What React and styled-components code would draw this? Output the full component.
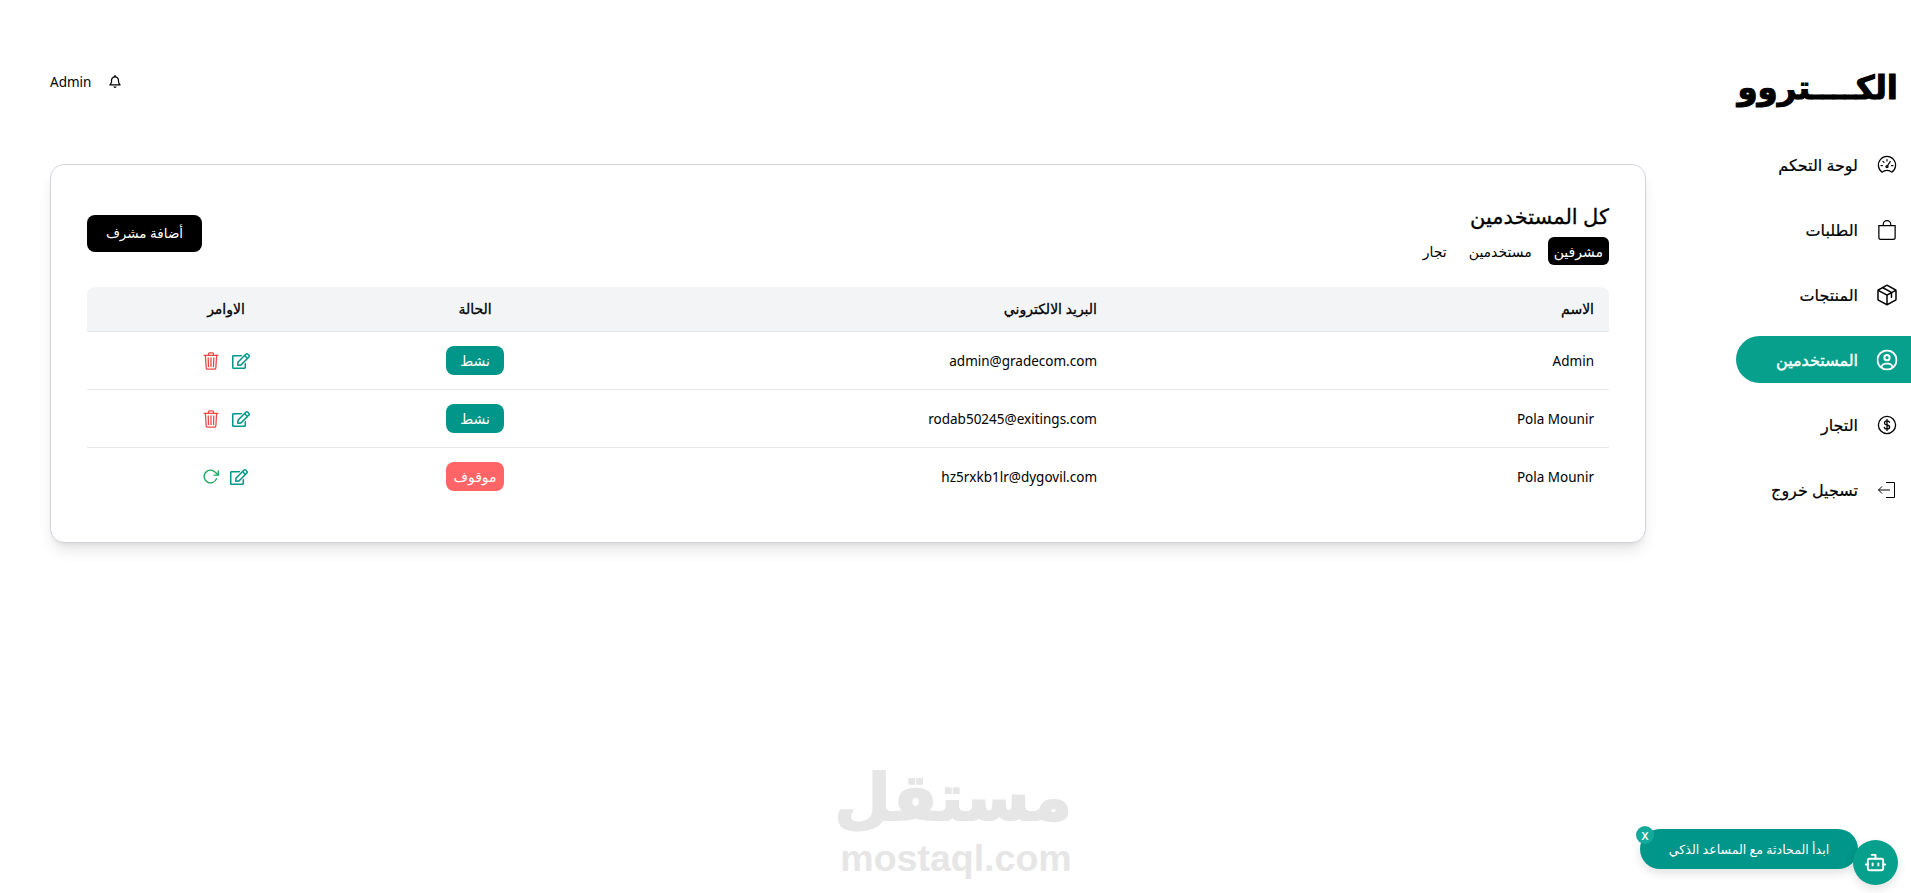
import React from 'react';
import styled, { createGlobalStyle } from 'styled-components';
import { FaRegEdit } from 'react-icons/fa';
import { IoTrashOutline } from 'react-icons/io5';
import { FiRotateCw } from 'react-icons/fi';
import { FaRegBell, FaRegCircleUser } from 'react-icons/fa6';
import { BsBag } from 'react-icons/bs';
import { PiPackage } from 'react-icons/pi';
import { LuBot } from 'react-icons/lu';

const GlobalStyle = createGlobalStyle`
  html, body {
    margin: 0;
    padding: 0;
    background: #fff;
  }
  body {
    font-family: "Noto Sans", "DejaVu Sans", sans-serif;
    color: #000;
  }
  * {
    box-sizing: border-box;
  }
`;

const Page = styled.div`
  display: flex;
  min-height: 893px;
  overflow: hidden;
`;

const Sidebar = styled.aside`
  width: 175px;
  flex-shrink: 0;
  padding-top: 64px;
`;

const Logo = styled.div`
  height: 46px;
  padding-right: 13px;
  font-size: 32.5px;
  line-height: 46px;
  font-weight: 700;
  white-space: nowrap;
  margin-bottom: 31px;
  -webkit-text-stroke: 1px #000;
`;

const Menu = styled.nav`
  display: flex;
  flex-direction: column;
  gap: 18px;
`;

const MenuItem = styled.a`
  display: flex;
  align-items: center;
  gap: 19px;
  height: 47px;
  padding-right: 14px;
  font-size: 16px;
  color: ${(p) => (p.$active ? '#fff' : '#000')};
  background: ${(p) => (p.$active ? '#07a08c' : 'transparent')};
  border-radius: 24px 0 0 24px;
  -webkit-text-stroke: ${(p) => (p.$active ? '0.4px #fff' : '0.2px #000')};

  svg {
    width: 20px;
    height: 20px;
    flex-shrink: 0;
  }
`;

const Main = styled.main`
  flex: 1;
  padding: 0 90px 0 50px;
`;

const TopBar = styled.header`
  display: flex;
  justify-content: flex-end;
  align-items: flex-start;
  gap: 18px;
  height: 164px;
  padding-top: 73px;
  font-size: 13.5px;

  svg {
    width: 12px;
    height: 13px;
    margin-top: 2px;
  }
`;

const Card = styled.section`
  background: #fff;
  border: 1px solid #d1d5db;
  border-radius: 14px;
  padding: 36px 36px 37px;
  box-shadow: 0 10px 15px -3px rgba(0, 0, 0, 0.1), 0 4px 6px -4px rgba(0, 0, 0, 0.1);
`;

const CardHead = styled.div`
  display: flex;
  justify-content: space-between;
  align-items: center;
  margin-bottom: 22px;
`;

const Title = styled.h2`
  margin: 0 0 6px;
  font-size: 21px;
  line-height: 30px;
  font-weight: 400;
  -webkit-text-stroke: 0.3px #000;
`;

const Tabs = styled.div`
  display: flex;
  gap: 10px;
`;

const Tab = styled.button`
  border: 0;
  height: 28px;
  padding: 0 6px;
  border-radius: 6px;
  font: inherit;
  font-size: 14px;
  background: ${(p) => (p.$active ? '#000' : 'transparent')};
  color: ${(p) => (p.$active ? '#fff' : '#000')};
`;

const AddButton = styled.button`
  border: 0;
  width: 115px;
  height: 37px;
  border-radius: 8px;
  background: #000;
  color: #fff;
  font: inherit;
  font-size: 13.5px;
`;

const Table = styled.table`
  width: 100%;
  table-layout: fixed;
  border-collapse: collapse;
  font-size: 13.5px;
`;

const HeadRow = styled.tr`
  height: 44px;
  background: #f3f4f6;
  border-bottom: 1px solid #e5e7eb;
`;

const Row = styled.tr`
  height: 58px;
  border-bottom: 1px solid #e5e7eb;

  &:last-child {
    border-bottom: 0;
  }
`;

const Th = styled.th`
  font-size: 14px;
  font-weight: 400;
  padding: 0 11px;
  text-align: ${(p) => (p.$center ? 'center' : 'right')};
  -webkit-text-stroke: 0.3px #000;

  &:first-child {
    border-radius: 0 8px 0 0;
    padding-right: 15px;
  }
  &:last-child {
    border-radius: 8px 0 0 0;
    padding-left: 26px;
  }
`;

const Td = styled.td`
  padding: 1px 11px 0;
  text-align: ${(p) => (p.$center ? 'center' : 'right')};

  &:first-child {
    padding-right: 15px;
  }
  &:last-child {
    padding-left: 24px;
  }
`;

const Badge = styled.span`
  display: inline-flex;
  align-items: center;
  justify-content: center;
  width: 58px;
  height: 29px;
  border-radius: 8px;
  color: #fff;
  font-size: 14px;
  background: ${(p) => (p.$off ? '#ff6467' : '#009689')};
`;

const Actions = styled.div`
  display: flex;
  justify-content: center;
  align-items: center;
  gap: 11px;
`;

const ActionIcon = styled.span`
  display: inline-flex;
  color: ${(p) => p.$color};

  svg {
    width: ${(p) => p.$size || 18}px;
    height: ${(p) => p.$size || 18}px;
  }
`;

const Watermark = styled.div`
  position: absolute;
  left: 840px;
  top: 758px;
  width: 232px;
  text-align: center;
  color: #e6e6e6;
  pointer-events: none;
`;

const WatermarkAr = styled.div`
  font-family: "DejaVu Sans", sans-serif;
  font-size: 65px;
  line-height: 80px;
  font-weight: 700;
  -webkit-text-stroke: 2px #e6e6e6;
`;

const WatermarkEn = styled.div`
  margin-top: 5px;
  font-family: "Liberation Sans", sans-serif;
  font-size: 37.5px;
  line-height: 30px;
  font-weight: 700;
  direction: ltr;
`;

const ChatBubble = styled.div`
  position: absolute;
  left: 1640px;
  top: 829px;
  width: 218px;
  height: 40px;
  border-radius: 20px;
  background: #009689;
  color: #fff;
  font-size: 12.6px;
  display: flex;
  align-items: center;
  justify-content: center;
  box-shadow: 0 4px 10px rgba(0, 0, 0, 0.12);
`;

const ChatClose = styled.span`
  position: absolute;
  left: -4px;
  top: -3px;
  width: 18px;
  height: 18px;
  border-radius: 50%;
  background: #14a99a;
  color: #fff;
  font-size: 11px;
  font-weight: 600;
  display: flex;
  align-items: center;
  justify-content: center;
`;

const ChatBot = styled.div`
  position: absolute;
  left: 1853px;
  top: 840px;
  width: 45px;
  height: 45px;
  border-radius: 50%;
  background: #07a08c;
  color: #fff;
  display: flex;
  align-items: center;
  justify-content: center;
  box-shadow: 0 4px 10px rgba(0, 0, 0, 0.12);
`;

const GaugeIcon = () => (
  <svg viewBox="0 0 20 20" fill="none" stroke="currentColor" strokeWidth="1.2" strokeLinecap="round">
    <path d="M5.2 17.2A8.6 8.6 0 1 1 14.8 17.2C13.6 16 12 15.4 10 15.4S6.4 16 5.2 17.2Z" />
    <path d="M10 11.5 13.2 6.6M4 10.6h1.4M14.6 10.6H16M6 6.4l1 1M10 4.6v1.4" />
    <circle cx="10" cy="11.6" r="1.1" />
  </svg>
);

const LogoutIcon = () => (
  <svg viewBox="0 0 20 20" fill="none" stroke="currentColor" strokeWidth="1">
    <path d="M9 2.500h8.500v15H9M13 10H1.500M5 6.500 1.500 10 5 13.500" />
  </svg>
);

const DollarCircle = () => (
  <svg viewBox="0 0 20 20" fill="none" stroke="currentColor" strokeWidth="1.300" strokeLinecap="round">
    <circle cx="10" cy="10" r="8.600" />
    <path d="M12.500 7.300C12.200 6.300 11.200 5.900 10 5.900c-1.400 0-2.500.7-2.500 2s1.100 1.800 2.500 2.100 2.600.8 2.600 2.100-1.200 2-2.600 2c-1.300 0-2.400-.5-2.700-1.600M10 4.500v11" />
  </svg>
);

const menuItems = [
  { label: 'لوحة التحكم', icon: <GaugeIcon /> },
  { label: 'الطلبات', icon: <BsBag /> },
  { label: 'المنتجات', icon: <PiPackage style={{ transform: 'scale(1.2)' }} /> },
  { label: 'المستخدمين', icon: <FaRegCircleUser style={{ transform: 'scale(1.05)' }} />, active: true },
  { label: 'التجار', icon: <DollarCircle /> },
  { label: 'تسجيل خروج', icon: <LogoutIcon /> },
];

const users = [
  { name: 'Admin', email: 'admin@gradecom.com', active: true },
  { name: 'Pola Mounir', email: 'rodab50245@exitings.com', active: true },
  { name: 'Pola Mounir', email: 'hz5rxkb1lr@dygovil.com', active: false },
];

export default function App() {
  return (
    <div dir="rtl">
      <GlobalStyle />
      <Page>
        <Sidebar>
          <Logo>الكــــتروو</Logo>
          <Menu>
            {menuItems.map((item) => (
              <MenuItem key={item.label} $active={item.active}>
                {item.icon}
                {item.label}
              </MenuItem>
            ))}
          </Menu>
        </Sidebar>
        <Main>
          <TopBar>
            <FaRegBell />
            <span>Admin</span>
          </TopBar>
          <Card>
            <CardHead>
              <div>
                <Title>كل المستخدمين</Title>
                <Tabs>
                  <Tab $active>مشرفين</Tab>
                  <Tab>مستخدمين</Tab>
                  <Tab>تجار</Tab>
                </Tabs>
              </div>
              <AddButton>أضافة مشرف</AddButton>
            </CardHead>
            <Table>
              <colgroup>
                <col width="501" />
                <col width="508" />
                <col width="250" />
                <col width="263" />
              </colgroup>
              <thead>
                <HeadRow>
                  <Th>الاسم</Th>
                  <Th>البريد الالكتروني</Th>
                  <Th $center>الحالة</Th>
                  <Th $center>الاوامر</Th>
                </HeadRow>
              </thead>
              <tbody>
                {users.map((user) => (
                  <Row key={user.email}>
                    <Td>{user.name}</Td>
                    <Td>{user.email}</Td>
                    <Td $center>
                      <Badge $off={!user.active}>{user.active ? 'نشط' : 'موقوف'}</Badge>
                    </Td>
                    <Td $center>
                      <Actions>
                        <ActionIcon $color="#009689"><FaRegEdit /></ActionIcon>
                        {user.active ? (
                          <ActionIcon $color="#ef4444" $size={20}><IoTrashOutline /></ActionIcon>
                        ) : (
                          <ActionIcon $color="#22a861" $size={17}><FiRotateCw /></ActionIcon>
                        )}
                      </Actions>
                    </Td>
                  </Row>
                ))}
              </tbody>
            </Table>
          </Card>
        </Main>
      </Page>
      <Watermark>
        <WatermarkAr>مستقل</WatermarkAr>
        <WatermarkEn>mostaql.com</WatermarkEn>
      </Watermark>
      <ChatBubble>
        <ChatClose>X</ChatClose>
        ابدأ المحادثة مع المساعد الذكي
      </ChatBubble>
      <ChatBot>
        <LuBot size={23} />
      </ChatBot>
    </div>
  );
}
